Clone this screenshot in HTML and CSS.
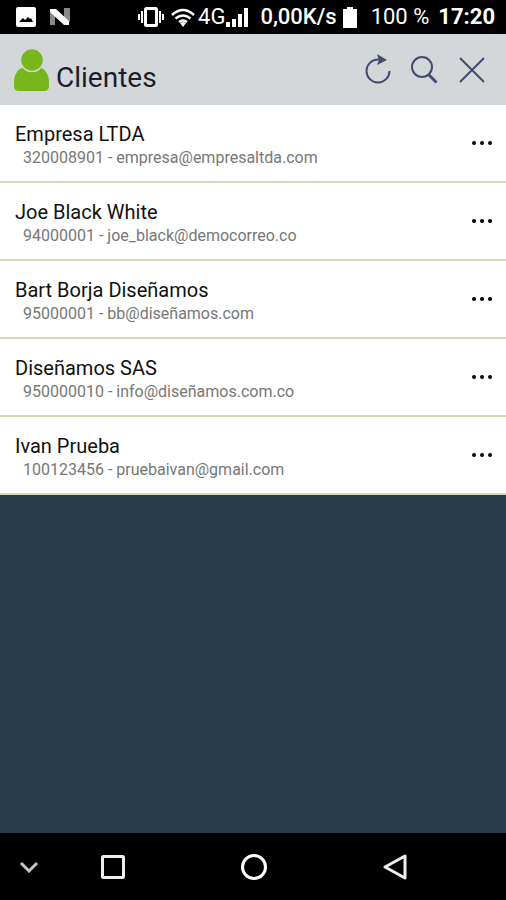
FILE: index.html
```html
<!DOCTYPE html>
<html lang="es">
<head>
<meta charset="utf-8">
<meta name="viewport" content="width=device-width, initial-scale=1">
<title>Clientes</title>
<link rel="stylesheet" href="styles.css">
</head>
<body>
<div class="status">
  <div class="notices">
    <svg width="20" height="20" viewBox="0 0 20 20"><rect width="20" height="20" rx="2" fill="#fff"/><path d="M3 15l4-4 2 2 3-3 2 2 1-1 2 4z" fill="#000"/></svg>
    <svg width="22" height="18" viewBox="0 0 22 18"><path d="M1 3l5 4v10H1zM15 0h6v14l-6-5z" fill="#888"/><path d="M1 1h6l13 12v4h-5L1 4z" fill="#fff"/></svg>
  </div>
  <div class="signals">
    <svg width="26" height="20" viewBox="0 0 26 20" fill="none" stroke="#fff" stroke-width="2"><rect x="7.500" y="1.500" width="11" height="17" rx="1" stroke-width="3"/><path d="M4 4v12M1 7v6M22 4v12M25 7v6"/></svg>
    <svg class="wifi" width="24" height="19" viewBox="0 0 24 19" fill="none" stroke="#fff" stroke-width="2.500"><path d="M1 7Q12-3 23 7M4.500 10.500q7.500-6 15 0M8 14q4-3 8 0"/><path d="M9 15q3-2 6 0l-3 4z" fill="#fff" stroke="none"/></svg>
    <span class="network">4G</span>
    <svg width="22" height="19" viewBox="0 0 22 19" fill="#fff"><path d="M0 14h4v5H0zM6 11h4v8H6zM12 6h4v13h-4zM18 0h4v19h-4z"/></svg>
  </div>
  <span class="rate">0,00K/s</span>
  <svg class="battery" width="14" height="21" viewBox="0 0 14 21"><path d="M4 0h6v2h4v19H0V2h4z" fill="#fff"/></svg>
  <span class="percent">100 %</span>
  <span class="clock">17:20</span>
</div>
<header class="header">
  <svg width="35" height="42" viewBox="0 0 35 42" fill="#77b71c"><path d="M9 19h17c5 0 9 7 9 14v4q0 5-5 5H5q-5 0-5-5v-4c0-7 4-14 9-14z"/><circle cx="18" cy="11" r="11.5" stroke="#d3d7da" stroke-width="1.5"/></svg>
  <h1>Clientes</h1>
  <div class="actions">
    <button type="button" aria-label="Actualizar"><svg width="28" height="32" viewBox="0 0 28 32" fill="none" stroke="#454a70" stroke-width="2"><path d="M17 5.500H14A11.500 11.500 0 1 0 25.500 17"/><path d="M13 0l10 6-10 5 2-5z" fill="#454a70" stroke="none"/></svg></button>
    <button type="button" aria-label="Buscar"><svg width="28" height="28" viewBox="0 0 28 28" fill="none" stroke="#454a70" stroke-width="2"><circle cx="11" cy="11" r="10"/><path d="M17.500 18.500l8 8" stroke-width="3"/></svg></button>
    <button type="button" aria-label="Cerrar"><svg width="26" height="26" viewBox="0 0 26 26" fill="none" stroke="#454a70" stroke-width="2"><path d="M1 1l24 24M25 1L1 25"/></svg></button>
  </div>
</header>
<main>
  <ul class="clients">
    <li><div class="client"><h2>Empresa LTDA</h2><p>320008901 - empresa@empresaltda.com</p></div><button type="button" aria-label="Opciones"><svg width="22" height="4" viewBox="0 0 22 4"><circle cx="3" cy="2" r="2"/><circle cx="11" cy="2" r="2"/><circle cx="19" cy="2" r="2"/></svg></button></li>
    <li><div class="client"><h2>Joe Black White</h2><p>94000001 - joe_black@democorreo.co</p></div><button type="button" aria-label="Opciones"><svg width="22" height="4" viewBox="0 0 22 4"><circle cx="3" cy="2" r="2"/><circle cx="11" cy="2" r="2"/><circle cx="19" cy="2" r="2"/></svg></button></li>
    <li><div class="client"><h2>Bart Borja Diseñamos</h2><p>95000001 - bb@diseñamos.com</p></div><button type="button" aria-label="Opciones"><svg width="22" height="4" viewBox="0 0 22 4"><circle cx="3" cy="2" r="2"/><circle cx="11" cy="2" r="2"/><circle cx="19" cy="2" r="2"/></svg></button></li>
    <li><div class="client"><h2>Diseñamos SAS</h2><p>950000010 - info@diseñamos.com.co</p></div><button type="button" aria-label="Opciones"><svg width="22" height="4" viewBox="0 0 22 4"><circle cx="3" cy="2" r="2"/><circle cx="11" cy="2" r="2"/><circle cx="19" cy="2" r="2"/></svg></button></li>
    <li><div class="client"><h2>Ivan Prueba</h2><p>100123456 - pruebaivan@gmail.com</p></div><button type="button" aria-label="Opciones"><svg width="22" height="4" viewBox="0 0 22 4"><circle cx="3" cy="2" r="2"/><circle cx="11" cy="2" r="2"/><circle cx="19" cy="2" r="2"/></svg></button></li>
  </ul>
</main>
<nav class="nav">
  <button type="button" aria-label="Ocultar"><svg width="20" height="12" viewBox="0 0 20 12" fill="none" stroke="#c4c4c4" stroke-width="3"><path d="M2 2l8 8 8-8"/></svg></button>
  <button type="button" aria-label="Recientes"><svg width="26" height="26" viewBox="0 0 26 26" fill="none" stroke="#eee" stroke-width="3"><rect x="2.500" y="2.500" width="21" height="21" rx="1"/></svg></button>
  <button type="button" aria-label="Inicio"><svg width="28" height="28" viewBox="0 0 28 28" fill="none" stroke="#fff" stroke-width="3"><circle cx="14" cy="14" r="11.500"/></svg></button>
  <button type="button" aria-label="Atrás"><svg width="26" height="28" viewBox="0 0 26 28" fill="none" stroke="#eee" stroke-width="3" stroke-linejoin="round"><path d="M23 3v22L3 14z"/></svg></button>
</nav>
</body>
</html>
```
FILE: styles.css
```css
* { box-sizing: border-box; }
body {
  margin: 0;
  min-height: 100vh;
  display: flex;
  flex-direction: column;
  background: #273e4b;
  color: #111;
  font-family: Roboto, "Liberation Sans", sans-serif;
}
h1, h2, p, ul { margin: 0; padding: 0; font-weight: 400; }
svg { display: block; flex: none; }
button {
  padding: 0;
  border: 0;
  background: none;
  display: flex;
  align-items: center;
  justify-content: center;
}
.status {
  display: flex;
  align-items: center;
  height: 34px;
  padding: 0 11px 0 16px;
  background: #000;
  color: #fff;
  font-size: 22px;
  line-height: 36px;
  white-space: nowrap;
}
.notices { display: flex; align-items: center; gap: 13px; margin-right: auto; }
.signals { display: flex; align-items: center; margin-right: 12px; }
.wifi { margin: 0 3px 0 7px; }
.network { margin-right: 1px; }
.rate { font-weight: 500; margin-right: 6px; }
.battery { margin-right: 14px; }
.percent { margin-right: 9px; }
.clock { font-weight: 700; }
.header {
  display: flex;
  align-items: center;
  height: 71px;
  padding: 0 11px 0 14px;
  gap: 7px;
  background: #d3d7da;
}
h1 { font-size: 28px; line-height: 32px; padding-top: 16px; color: #1b1e2b; }
.actions { display: flex; margin-left: auto; }
.actions button { width: 47px; height: 50px; }
.clients { list-style: none; background: #fff; }
.clients li {
  display: flex;
  align-items: center;
  justify-content: space-between;
  height: 78px;
  padding: 0 4px 0 15px;
  border-bottom: 2px solid #d3dbb4;
}
.client { padding-top: 6px; }
h2 { font-size: 20px; line-height: 24px; }
p { padding-left: 8px; font-size: 16px; line-height: 24px; color: #777; }
.clients button { width: 40px; height: 40px; }
.nav {
  display: grid;
  grid-template-columns: 28px 1fr 1fr 1fr;
  height: 67px;
  margin-top: auto;
  padding: 0 41px 0 15px;
  background: #000;
}
```
